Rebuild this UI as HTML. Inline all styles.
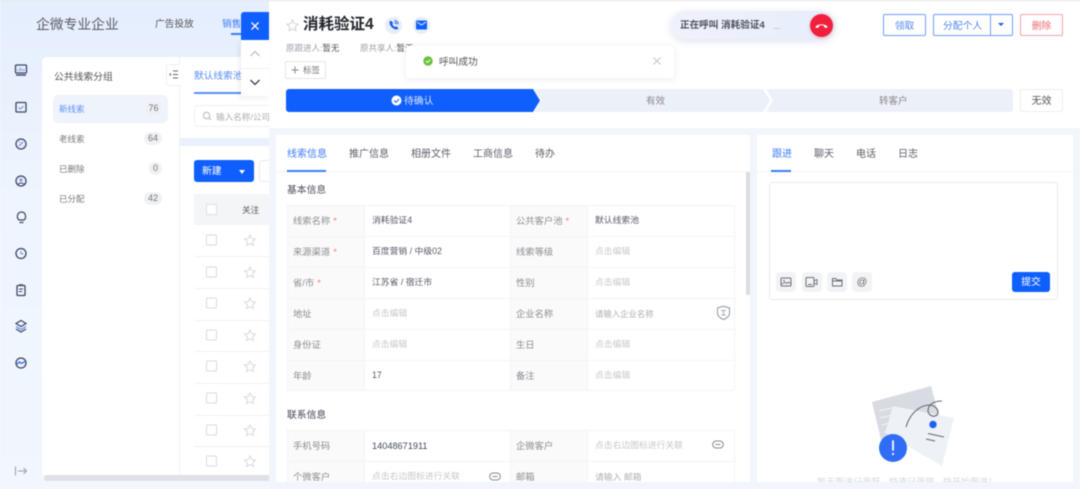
<!DOCTYPE html>
<html lang="zh"><head><meta charset="utf-8"><title>线索详情</title>
<style>
html,body{margin:0;padding:0}
body{width:1080px;height:489px;overflow:hidden;background:#fff}
#r{position:relative;width:1080px;height:489px;overflow:hidden;font-family:"Liberation Sans","Noto Sans CJK SC",sans-serif;background:linear-gradient(180deg,#e5eefd 0,#eef5fe 40%,#f2f7fe 100%);filter:blur(.45px)}
#r div,#r span.a,#r svg{position:absolute}
.t{position:absolute;white-space:nowrap;line-height:14px;font-size:9.5px;color:#666}
.c{position:absolute;white-space:nowrap;line-height:14px;text-align:center}
.w{background:#fff}
.lb{color:#8a8d94;font-size:9.3px}
.val{color:#555a66;font-size:8.8px}
.ph{color:#c6c8cd;font-size:8.8px}
.req{color:#f77;margin-left:3px}
.tab{font-size:10px;color:#5b5f69}
.act{color:#3d7bf6}
.pill{background:#f0f1f4;border-radius:7px;height:13px;line-height:13px;font-size:9px;color:#777;text-align:center}
</style></head><body><div id="r">
<div style="left:0;top:0;width:1080px;height:1px;background:#e2e4e8"></div>

<!-- top nav -->
<span class="t" style="left:36px;top:17px;font-size:13.8px;line-height:16px;color:#585c66">企微专业企业</span>
<span class="t" style="left:155px;top:18px;font-size:9.7px;color:#555">广告投放</span>
<span class="t" style="left:222px;top:18px;font-size:9.7px;color:#3d7bf6">销售</span>
<div style="left:231px;top:33px;width:12px;height:2px;background:#3d7bf6"></div>

<!-- sidebar icons -->
<svg style="left:13px;top:62px" width="17" height="17" viewBox="0 0 17 17" fill="none"><rect x="2.5" y="3" width="11" height="8" rx="1" stroke="#3f4560" stroke-width="1.3"/><path d="M5 9V7.5M7 9V5.5M9 9V6.5M11 9V7" stroke="#6f93ea"/><path d="M3 13h10" stroke="#3f4560" stroke-width="1.4"/></svg>
<svg style="left:13px;top:99px" width="17" height="17" viewBox="0 0 17 17" fill="none"><rect x="3" y="3.5" width="10" height="9.5" rx="1" stroke="#3f4560" stroke-width="1.3"/><path d="M5.5 8.5l2 1.5 3-3" stroke="#5f8aef"/></svg>
<svg style="left:13px;top:136px" width="17" height="17" viewBox="0 0 17 17" fill="none"><circle cx="8" cy="8" r="5" stroke="#3f4560" stroke-width="1.3"/><path d="M6 10l4-4M6 6h1M9.5 10H10" stroke="#5f8aef" stroke-width="1.2"/></svg>
<svg style="left:13px;top:173px" width="17" height="17" viewBox="0 0 17 17" fill="none"><circle cx="8" cy="8" r="5" stroke="#3f4560" stroke-width="1.3"/><circle cx="8" cy="7" r="1.7" fill="#7f9df0"/><path d="M5 11.5c1-2 5-2 6 0" stroke="#3f4560"/></svg>
<svg style="left:13px;top:209px" width="17" height="17" viewBox="0 0 17 17" fill="none"><path d="M6 11C3 8.5 4.5 3 8.5 3S14 8.5 11 11z" stroke="#3f4560" stroke-width="1.2"/><path d="M6.5 13.5h4" stroke="#3f4560" stroke-width="1.2"/></svg>
<svg style="left:13px;top:245px" width="17" height="17" viewBox="0 0 17 17" fill="none"><circle cx="8" cy="8.5" r="5" stroke="#3f4560" stroke-width="1.3"/><path d="M8 6v2.800h2.500" stroke="#5f8aef"/></svg>
<svg style="left:13px;top:282px" width="17" height="17" viewBox="0 0 17 17" fill="none"><rect x="4" y="3.5" width="8" height="10" rx="1" stroke="#3f4560" stroke-width="1.3"/><path d="M6 2.800h4M6 7h4M6 9.5h3" stroke="#3f4560"/></svg>
<svg style="left:13px;top:318px" width="17" height="17" viewBox="0 0 17 17" fill="none"><path d="M8 2.5l5 3-5 3-5-3z" stroke="#3f4560" stroke-width="1.2"/><path d="M3 8.500l5 3 5-3" stroke="#5f8aef" stroke-width="1.2"/><path d="M3 11l5 3 5-3" stroke="#3f4560" stroke-width="1.2"/></svg>
<svg style="left:13px;top:355px" width="17" height="17" viewBox="0 0 17 17" fill="none"><circle cx="8" cy="8" r="5" stroke="#3f4560" stroke-width="1.3"/><path d="M4 9l2.500-2 2 1.500L12 6.500" stroke="#3d7bf6" stroke-width="1.5"/></svg>
<svg style="left:14px;top:465px" width="14" height="12" viewBox="0 0 14 12" fill="none"><path d="M1.500 1.500v9M4 6h8.500M9.500 3l3 3-3 3" stroke="#9a9ea8"/></svg>

<!-- left card -->
<div class="w" style="left:42px;top:57px;width:240px;height:418px;border-radius:5px 0 0 0"></div>
<div style="left:179px;top:57px;width:1px;height:418px;background:#f1f2f5"></div>
<span class="t" style="left:54px;top:71px;font-size:9.8px;color:#555">公共线索分组</span>
<div class="w" style="left:166px;top:64px;width:14px;height:22px;border:1px solid #eceef2;border-right:0;border-radius:3px 0 0 3px;box-sizing:border-box"></div>
<svg style="left:168px;top:69px" width="11" height="11" viewBox="0 0 11 11" fill="none"><path d="M1 5.500l2-1.500v3z" fill="#667"/><path d="M5 2h5M5 5.500h5M5 9h5" stroke="#667" stroke-width=".9"/></svg>
<div style="left:53px;top:95px;width:115px;height:28px;border-radius:5px;background:#eff4fc"></div>
<span class="t" style="left:59px;top:102px;font-size:8.5px;color:#5b8ef5">新线索</span>
<div class="pill" style="left:145px;top:102px;width:17px;background:#eef0f4">76</div>
<span class="t" style="left:59px;top:132px;font-size:8.5px;color:#777">老线索</span>
<div class="pill" style="left:144px;top:132px;width:18px">64</div>
<span class="t" style="left:59px;top:162px;font-size:8.5px;color:#777">已删除</span>
<div class="pill" style="left:149px;top:162px;width:13px">0</div>
<span class="t" style="left:59px;top:192px;font-size:8.5px;color:#777">已分配</span>
<div class="pill" style="left:144px;top:192px;width:18px">42</div>

<span class="t" style="left:194px;top:70px;font-size:9.7px;color:#5b8ef5">默认线索池</span>
<div style="left:194px;top:92px;width:48px;height:1.5px;background:#5b8ef5"></div>
<div style="left:194px;top:105px;width:90px;height:22px;border:1px solid #eef0f3;box-sizing:border-box;border-radius:3px"></div>
<svg style="left:202px;top:111px" width="10" height="11" viewBox="0 0 10 11" fill="none"><circle cx="4.500" cy="4.500" r="3.200" stroke="#b5b8be"/><path d="M7 7l2 2" stroke="#b5b8be"/></svg>
<span class="t" style="left:216px;top:110px;font-size:8.6px;color:#aaadb3">输入名称/公司</span>
<div style="left:180px;top:138px;width:100px;height:8px;background:#e9f1fc"></div>
<div style="left:194px;top:160px;width:60px;height:22px;border-radius:3px;background:#0f5fff"></div>
<span class="t" style="left:202px;top:165px;font-size:9.8px;color:#fff">新建</span>
<div style="left:239px;top:170px;width:0;height:0;border:3.5px solid transparent;border-top:4px solid #fff"></div>
<div style="left:259px;top:160px;width:30px;height:22px;border:1px solid #e8eaee;box-sizing:border-box;border-radius:3px"></div>
<div style="left:194px;top:194px;width:90px;height:31px;background:#f4f5f6"></div>
<div class="w" style="left:206px;top:204px;width:11px;height:11px;border:1px solid #dfe1e5;border-radius:1px;box-sizing:border-box"></div>
<span class="t" style="left:242px;top:203px;font-size:8.6px;color:#555">关注</span>

<!-- rows -->
<div style="left:194px;top:256px;width:90px;height:1px;background:#f0f1f3"></div>
<div style="left:194px;top:288px;width:90px;height:1px;background:#f0f1f3"></div>
<div style="left:194px;top:320px;width:90px;height:1px;background:#f0f1f3"></div>
<div style="left:194px;top:351px;width:90px;height:1px;background:#f0f1f3"></div>
<div style="left:194px;top:383px;width:90px;height:1px;background:#f0f1f3"></div>
<div style="left:194px;top:415px;width:90px;height:1px;background:#f0f1f3"></div>
<div style="left:194px;top:446px;width:90px;height:1px;background:#f0f1f3"></div>
<svg style="left:200px;top:230px" width="60" height="240" viewBox="0 0 60 240" fill="none" stroke="#d9dbe0">
<g><rect x="6.500" y="5" width="10" height="10" rx="1"/><path d="M50 5l1.700 3.500 3.800.5-2.800 2.600.7 3.800-3.400-1.800-3.400 1.800.7-3.800-2.800-2.600 3.800-.5z"/></g>
<g transform="translate(0,32)"><rect x="6.500" y="5" width="10" height="10" rx="1"/><path d="M50 5l1.700 3.500 3.800.5-2.800 2.600.7 3.800-3.400-1.800-3.400 1.800.7-3.800-2.800-2.600 3.800-.5z"/></g>
<g transform="translate(0,63)"><rect x="6.500" y="5" width="10" height="10" rx="1"/><path d="M50 5l1.700 3.500 3.800.5-2.800 2.600.7 3.800-3.400-1.800-3.400 1.800.7-3.800-2.800-2.600 3.800-.5z"/></g>
<g transform="translate(0,95)"><rect x="6.500" y="5" width="10" height="10" rx="1"/><path d="M50 5l1.700 3.500 3.800.5-2.800 2.600.7 3.800-3.400-1.800-3.400 1.800.7-3.800-2.800-2.600 3.800-.5z"/></g>
<g transform="translate(0,126)"><rect x="6.500" y="5" width="10" height="10" rx="1"/><path d="M50 5l1.700 3.500 3.800.5-2.800 2.600.7 3.800-3.400-1.800-3.400 1.800.7-3.800-2.800-2.600 3.800-.5z"/></g>
<g transform="translate(0,158)"><rect x="6.500" y="5" width="10" height="10" rx="1"/><path d="M50 5l1.700 3.500 3.800.5-2.800 2.600.7 3.800-3.400-1.800-3.400 1.800.7-3.800-2.800-2.600 3.800-.5z"/></g>
<g transform="translate(0,190)"><rect x="6.500" y="5" width="10" height="10" rx="1"/><path d="M50 5l1.700 3.500 3.800.5-2.800 2.600.7 3.800-3.400-1.800-3.400 1.800.7-3.800-2.800-2.600 3.800-.5z"/></g>
<g transform="translate(0,221)"><rect x="6.500" y="5" width="10" height="10" rx="1"/><path d="M50 5l1.700 3.500 3.800.5-2.800 2.600.7 3.800-3.400-1.800-3.400 1.800.7-3.800-2.800-2.600 3.800-.5z"/></g>
</svg>
<div style="left:44px;top:475px;width:230px;height:6px;border-radius:3px;background:#dfe1e6"></div>

<!-- panel -->
<div style="left:269px;top:1px;width:811px;height:488px;background:#f2f5fb"></div>
<div class="w" style="left:269px;top:1px;width:811px;height:127px"></div>

<!-- float nav -->
<div class="w" style="left:241px;top:40px;width:28px;height:56px;box-shadow:-2px 2px 5px rgba(0,0,0,.07)"></div>
<div style="left:241px;top:68px;width:28px;height:1px;background:#f0f1f3"></div>
<div style="left:241px;top:12px;width:28px;height:28px;background:#0f5fff;border-radius:3px 0 0 0"></div>
<svg style="left:249px;top:20px" width="12" height="12" viewBox="0 0 12 12" fill="none"><path d="M2.500 2.500l7 7M9.500 2.500l-7 7" stroke="#fff" stroke-width="1.300"/></svg>
<svg style="left:249px;top:49px" width="12" height="10" viewBox="0 0 12 10" fill="none"><path d="M1.500 7L6 2.500 10.500 7" stroke="#b9bcc2" stroke-width="1.200"/></svg>
<svg style="left:249px;top:77px" width="12" height="10" viewBox="0 0 12 10" fill="none"><path d="M1.500 3L6 7.500 10.500 3" stroke="#3a3f4a" stroke-width="1.300"/></svg>

<!-- header -->
<svg style="left:286px;top:19px" width="13" height="13" viewBox="0 0 13 13" fill="none"><path d="M6.500 1l1.700 3.600 3.900.5-2.900 2.700.8 3.900-3.500-1.900L3 11.700l.8-3.900L.9 5.100l3.900-.5z" stroke="#cfd1d6"/></svg>
<span class="t" style="left:303px;top:15px;font-size:15.5px;line-height:20px;font-weight:700;color:#23262e">消耗验证4</span>
<div style="left:385px;top:17px;width:17px;height:17px;border-radius:50%;background:#e8edfb"></div>
<svg style="left:387px;top:18px" width="14" height="14" viewBox="0 0 14 14" fill="none"><path d="M3.500 2.500L2.500 4c0 4 3.500 7.500 7.500 7.500l1.500-1.200-2.200-2-1.300.7C6.800 8.500 5.800 7.300 5.300 6l.9-1.200z" fill="#1a5ce8"/><path d="M7.500 2.500c2 .3 3.500 1.800 3.800 3.800M7.500 4.500c1 .2 1.700.9 1.900 1.900" stroke="#1a5ce8" stroke-width=".9"/></svg>
<div style="left:413px;top:17px;width:17px;height:17px;border-radius:50%;background:#e8edfb"></div>
<svg style="left:416px;top:20px" width="11" height="10" viewBox="0 0 11 10"><rect x="0" y="0.500" width="11" height="9" rx="1" fill="#0f5fff"/><path d="M1 2l4.500 3L10 2" stroke="#e8edfb" fill="none"/></svg>
<span class="t" style="left:286px;top:41px;font-size:8.5px;color:#9a9da4">原跟进人:<span style="color:#555">暂无</span></span>
<span class="t" style="left:360px;top:41px;font-size:8.5px;color:#9a9da4">原共享人:<span style="color:#555">暂无</span></span>
<div style="left:285px;top:61px;width:41px;height:18px;border:1px solid #e4e6ea;border-radius:2px;box-sizing:border-box"></div>
<svg style="left:291px;top:66px" width="8" height="8" viewBox="0 0 8 8"><path d="M4 .5v7M.5 4h7" stroke="#888" fill="none"/></svg>
<span class="t" style="left:303px;top:63px;font-size:8.5px;color:#777">标签</span>

<!-- steps -->
<svg style="left:285px;top:89px" width="730" height="23" viewBox="0 0 730 23">
<path d="M4 0H248l7 11.500-7 11.500H4a3 3 0 0 1-3-3V3a3 3 0 0 1 3-3z" fill="#0f5fff"/>
<path d="M249 0H478l7 11.500-7 11.500H249l7-11.500z" fill="#ecf0f9"/>
<path d="M481 0H725a3 3 0 0 1 3 3V20a3 3 0 0 1-3 3H481l7-11.500z" fill="#ecf0f9"/>
</svg>
<svg style="left:391px;top:95px" width="11" height="11" viewBox="0 0 11 11"><circle cx="5.500" cy="5.500" r="5" fill="#fff"/><path d="M3 5.500l2 1.800 3-3.200" stroke="#0f5fff" fill="none"/></svg>
<span class="t" style="left:404px;top:95px;font-size:9.8px;color:#dbe6ff">待确认</span>
<span class="t" style="left:646px;top:95px;font-size:9.5px;color:#888">有效</span>
<span class="t" style="left:879px;top:95px;font-size:9.5px;color:#888">转客户</span>
<div class="c" style="left:1020px;top:89px;width:43px;height:23px;line-height:24px;border:1px solid #eceef2;box-sizing:border-box;border-radius:2px;font-size:10px;color:#555">无效</div>

<!-- buttons -->
<div class="c" style="left:883px;top:14px;width:43px;height:22px;line-height:23px;border:1px solid #6d9ef8;box-sizing:border-box;border-radius:2px;font-size:9.8px;color:#4f86f0">领取</div>
<div class="c" style="left:933px;top:14px;width:80px;height:22px;line-height:23px;border:1px solid #6d9ef8;box-sizing:border-box;border-radius:2px;font-size:9.8px;color:#4f86f0;text-align:left;padding-left:9px">分配个人</div>
<div style="left:990px;top:14px;width:1px;height:22px;background:#6d9ef8"></div>
<div style="left:998px;top:23px;width:0;height:0;border:3px solid transparent;border-top:3.5px solid #1a5ce8"></div>
<div class="c" style="left:1020px;top:14px;width:43px;height:22px;line-height:23px;border:1px solid #f9a0a6;box-sizing:border-box;border-radius:2px;font-size:9.8px;color:#f06a72">删除</div>

<!-- call pill -->
<div style="left:671px;top:11px;width:164px;height:28px;border-radius:14px;background:linear-gradient(90deg,#f0f2fb,#e6edfb);box-shadow:0 2px 8px rgba(70,90,170,.18)"></div>
<span class="t" style="left:680px;top:19px;font-size:9.6px;font-weight:700;color:#4c505c">正在呼叫 消耗验证4</span>
<span class="t" style="left:773px;top:19px;font-size:9px;color:#999">...</span>
<div style="left:810px;top:14px;width:23px;height:23px;border-radius:50%;background:#f0203d;box-shadow:0 1px 3px rgba(230,30,60,.3)"></div>
<svg style="left:814px;top:20px" width="15" height="10" viewBox="0 0 15 10"><path d="M1.500 7C3 3.500 12 3.500 13.500 7l-.5 1-3-.8-.2-1.700c-1.300-.4-2.300-.4-4.600 0L5 7.200 2 8z" fill="#fff"/></svg>

<!-- toast -->
<div class="w" style="left:406px;top:46px;width:268px;height:32px;border-radius:3px;box-shadow:0 1px 8px rgba(0,0,0,.09)"></div>
<svg style="left:423px;top:56px" width="10" height="10" viewBox="0 0 10 10"><circle cx="5" cy="5" r="4.700" fill="#67c23a"/><path d="M2.800 5l1.700 1.500L7.300 3.700" stroke="#fff" fill="none"/></svg>
<span class="t" style="left:439px;top:56px;font-size:9.7px;color:#555">呼叫成功</span>
<svg style="left:653px;top:57px" width="8" height="8" viewBox="0 0 8 8"><path d="M.5.500l7 7M7.500.500l-7 7" stroke="#c4c6cb" fill="none"/></svg>

<!-- left main card -->
<div class="w" style="left:276px;top:135px;width:474px;height:347px"></div>
<div style="left:276px;top:171px;width:474px;height:1px;background:#f2f4f8"></div>
<span class="t tab act" style="left:287px;top:148px">线索信息</span>
<span class="t tab" style="left:349px;top:148px">推广信息</span>
<span class="t tab" style="left:411px;top:148px">相册文件</span>
<span class="t tab" style="left:473px;top:148px">工商信息</span>
<span class="t tab" style="left:535px;top:148px">待办</span>
<div style="left:287px;top:170px;width:39px;height:1.5px;background:#3d7bf6"></div>
<div style="left:746px;top:172px;width:4px;height:123px;background:#dcdde0"></div>

<span class="t" style="left:287px;top:184px;font-size:9.8px;color:#4a4e5a">基本信息</span>
<div style="left:287px;top:205px;width:448px;height:186px;border:1px solid #f3f4f6;box-sizing:border-box;background:linear-gradient(90deg,#fafafa 0,#fafafa 77px,#fff 77px,#fff 223px,#fafafa 223px,#fafafa 300px,#fff 300px)"></div>
<div style="left:287px;top:236px;width:448px;height:1px;background:#f3f4f6"></div>
<div style="left:287px;top:267px;width:448px;height:1px;background:#f3f4f6"></div>
<div style="left:287px;top:298px;width:448px;height:1px;background:#f3f4f6"></div>
<div style="left:287px;top:329px;width:448px;height:1px;background:#f3f4f6"></div>
<div style="left:287px;top:360px;width:448px;height:1px;background:#f3f4f6"></div>
<div style="left:364px;top:205px;width:1px;height:186px;background:#f3f4f6"></div>
<div style="left:510px;top:205px;width:1px;height:186px;background:#f3f4f6"></div>
<div style="left:587px;top:205px;width:1px;height:186px;background:#f3f4f6"></div>

<span class="t lb" style="left:293px;top:214px">线索名称<span class="req">*</span></span><span class="t val" style="left:372px;top:213px">消耗验证4</span><span class="t lb" style="left:516px;top:214px">公共客户池<span class="req">*</span></span><span class="t val" style="left:595px;top:213px">默认线索池</span>
<span class="t lb" style="left:293px;top:245px">来源渠道<span class="req">*</span></span><span class="t val" style="left:372px;top:244px">百度营销 / 中级02</span><span class="t lb" style="left:516px;top:245px">线索等级</span><span class="t ph" style="left:595px;top:244px">点击编辑</span>
<span class="t lb" style="left:293px;top:276px">省/市<span class="req">*</span></span><span class="t val" style="left:372px;top:275px">江苏省 / 宿迁市</span><span class="t lb" style="left:516px;top:276px">性别</span><span class="t ph" style="left:595px;top:275px">点击编辑</span>
<span class="t lb" style="left:293px;top:307px">地址</span><span class="t ph" style="left:372px;top:306px">点击编辑</span><span class="t lb" style="left:516px;top:307px">企业名称</span><span class="t ph" style="left:595px;top:307px;color:#aeb0b6;font-size:8.4px">请输入企业名称</span>
<svg style="left:716px;top:305px" width="15" height="16" viewBox="0 0 15 16" fill="none"><path d="M1.500 3l6-1.800 6 1.800v5c0 3-3 5.500-6 6.500-3-1-6-3.500-6-6.500z" stroke="#8f98a3"/><path d="M5 5.500h5M7.500 5.500v4.500M5.200 10h4.600" stroke="#8f98a3" stroke-width=".8"/></svg>
<span class="t lb" style="left:293px;top:338px">身份证</span><span class="t ph" style="left:372px;top:337px">点击编辑</span><span class="t lb" style="left:516px;top:338px">生日</span><span class="t ph" style="left:595px;top:337px">点击编辑</span>
<span class="t lb" style="left:293px;top:369px">年龄</span><span class="t val" style="left:372px;top:368px">17</span><span class="t lb" style="left:516px;top:369px">备注</span><span class="t ph" style="left:595px;top:368px">点击编辑</span>

<span class="t" style="left:287px;top:409px;font-size:9.8px;color:#3f4454">联系信息</span>
<div style="left:287px;top:430px;width:448px;height:60px;border:1px solid #f3f4f6;box-sizing:border-box;background:linear-gradient(90deg,#fafafa 0,#fafafa 77px,#fff 77px,#fff 223px,#fafafa 223px,#fafafa 300px,#fff 300px)"></div>
<div style="left:287px;top:461px;width:448px;height:1px;background:#f3f4f6"></div>
<div style="left:364px;top:430px;width:1px;height:60px;background:#f3f4f6"></div>
<div style="left:510px;top:430px;width:1px;height:60px;background:#f3f4f6"></div>
<div style="left:587px;top:430px;width:1px;height:60px;background:#f3f4f6"></div>
<span class="t lb" style="left:293px;top:439px">手机号码</span><span class="t val" style="left:372px;top:439px;color:#444a5c;font-size:9.2px">14048671911</span><span class="t lb" style="left:516px;top:439px">企微客户</span><span class="t ph" style="left:595px;top:438px">点击右边图标进行关联</span>
<svg style="left:712px;top:440px" width="12" height="9" viewBox="0 0 12 9" fill="none"><rect x=".7" y="1" width="10.6" height="7" rx="3.5" stroke="#858a93" stroke-width="1"/><path d="M3.500 4.500h5" stroke="#858a93"/></svg>
<span class="t lb" style="left:293px;top:470px">个微客户</span><span class="t ph" style="left:372px;top:469px">点击右边图标进行关联</span><span class="t lb" style="left:516px;top:470px">邮箱</span><span class="t ph" style="left:595px;top:470px;color:#aeb0b6">请输入 邮箱</span>
<svg style="left:489px;top:472px" width="12" height="9" viewBox="0 0 12 9" fill="none"><rect x=".7" y="1" width="10.6" height="7" rx="3.5" stroke="#858a93" stroke-width="1"/><path d="M3.500 4.500h5" stroke="#858a93"/></svg>
<div style="left:270px;top:482px;width:485px;height:7px;background:#f2f5fb"></div>

<!-- right card -->
<div class="w" style="left:757px;top:135px;width:316px;height:347px"></div>
<div style="left:757px;top:171px;width:316px;height:1px;background:#f2f4f8"></div>
<span class="t tab act" style="left:772px;top:148px">跟进</span>
<span class="t tab" style="left:814px;top:148px">聊天</span>
<span class="t tab" style="left:856px;top:148px">电话</span>
<span class="t tab" style="left:898px;top:148px">日志</span>
<div style="left:771px;top:170px;width:20px;height:1.5px;background:#3d7bf6"></div>
<div style="left:769px;top:182px;width:289px;height:118px;border:1px solid #e9ebef;box-sizing:border-box;border-radius:3px"></div>
<div style="left:776px;top:272px;width:20px;height:20px;border-radius:4px;background:#f2f3f6"></div>
<div style="left:802px;top:272px;width:20px;height:20px;border-radius:4px;background:#f2f3f6"></div>
<div style="left:827px;top:272px;width:20px;height:20px;border-radius:4px;background:#f2f3f6"></div>
<div style="left:852px;top:272px;width:20px;height:20px;border-radius:4px;background:#f2f3f6"></div>
<svg style="left:780px;top:276px" width="12" height="12" viewBox="0 0 12 12" fill="none"><rect x="1" y="2" width="10" height="8" rx="1" stroke="#6c6f78"/><path d="M1.500 8.500L4.500 6l2 1.500 2-1.500 2.500 2" stroke="#6c6f78" stroke-width=".8"/><circle cx="4" cy="4.500" r=".8" fill="#6c6f78"/></svg>
<svg style="left:805px;top:276px" width="13" height="12" viewBox="0 0 13 12" fill="none"><rect x="1" y="1.500" width="8" height="9" rx="1" stroke="#6c6f78"/><path d="M9 5l3-1.500v5L9 7M3 8.500h4" stroke="#6c6f78" stroke-width=".9"/></svg>
<svg style="left:831px;top:276px" width="12" height="12" viewBox="0 0 12 12" fill="none"><path d="M1.500 2.500h3.300l1 1.500h5.200v6h-9.500zM1.500 5h9.500" stroke="#6c6f78"/></svg>
<span class="c" style="left:852px;top:275px;width:20px;font-size:10.5px;color:#666">@</span>
<div class="c" style="left:1012px;top:272px;width:38px;height:20px;line-height:21px;border-radius:3px;background:#0f5fff;color:#fff;font-size:9.8px">提交</div>

<!-- illustration -->
<svg style="left:865px;top:380px" width="100" height="90" viewBox="865 380 100 90" fill="none">
<path d="M872 402l59-16 8 30-50 36-7-8z" fill="#d8dce2"/>
<path d="M879 411l13-3M880 418l17-4M882 425l15-4M884 432l10-2" stroke="#eef0f3" stroke-width="1.200"/>
<path d="M893 406l61 12-12 48-57-33z" fill="#eef1f5"/>
<path d="M906 427c4-14 14-22 24-22 6 1 10 6 7 10-4 3-9 0-9-5 1-6 6-9 14-9" stroke="#66696f" stroke-width="1.100"/>
<circle cx="933" cy="424.500" r="3.700" fill="#1a62f5"/>
<path d="M928 433.500l16 3.500M926 439l9 2" stroke="#66696f" stroke-width="1"/>
<circle cx="893" cy="448" r="14" fill="#2f6df5"/>
<path d="M893 441v9" stroke="#fff" stroke-width="1.800" stroke-linecap="round"/><circle cx="893" cy="454" r="1.100" fill="#fff"/>
</svg>
<span class="t" style="left:817px;top:475px;font-size:9px;color:#d4d6db">暂无跟进记录呀，快速记录吧，快开始跟进！</span>
<div style="left:757px;top:482px;width:323px;height:7px;background:#f2f5fb"></div>
</div></body></html>
